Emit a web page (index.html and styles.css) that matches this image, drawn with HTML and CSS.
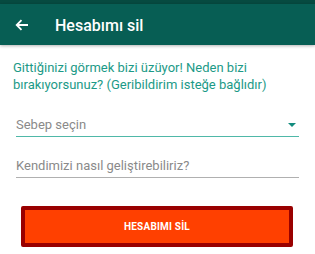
FILE: index.html
```html
<!DOCTYPE html>
<html lang="tr">
<head>
<meta charset="utf-8">
<link rel="stylesheet" href="styles.css">
</head>
<body>
<div class="status"></div>
<header class="toolbar">
  <svg class="back" width="14" height="12" viewBox="0 0 14 12"><path d="M13 6H2M6.5 1.2L1.7 6l4.8 4.8" fill="none" stroke="#fff" stroke-width="1.8"/></svg>
  <span class="title">Hesabımı sil</span>
</header>
<main class="content">
  <p class="intro">Gittiğinizi görmek bizi üzüyor! Neden bizi bırakıyorsunuz? (Geribildirim isteğe bağlıdır)</p>
  <div class="field select">
    <span class="placeholder">Sebep seçin</span>
    <span class="caret"></span>
  </div>
  <div class="field input">
    <span class="placeholder">Kendimizi nasıl geliştirebiliriz?</span>
  </div>
  <div class="actions">
    <button class="delete">HESABIMI SİL</button>
  </div>
</main>
</body>
</html>
```
FILE: styles.css
```css
html, body {
  margin: 0;
  padding: 0;
  background: #fff;
  font-family: Roboto, "Noto Sans", sans-serif;
}
.status {
  height: 4px;
  background: #064a40;
}
.toolbar {
  height: 41px;
  background: #075e54;
  display: flex;
  align-items: center;
  box-shadow: 0 1px 3px rgba(0,0,0,0.3);
  position: relative;
}
.back {
  margin-left: 15px;
  width: 14px;
  height: 12px;
}
.title {
  margin-left: 26px;
  color: #fff;
  font-size: 16px;
  font-weight: 500;
  margin-top: 1px;
}
.content {
  padding: 0 16px;
}
.intro {
  margin: 14px 0 0 -3px;
  color: #1c9a87;
  font-size: 13px;
  line-height: 17px;
}
.field {
  display: flex;
  align-items: flex-end;
  justify-content: space-between;
  height: 25px;
  box-sizing: border-box;
  padding-bottom: 3px;
}
.placeholder {
  color: #8a8a8a;
  font-size: 13px;
  line-height: 16px;
}
.select {
  margin-top: 19px;
  border-bottom: 1px solid #4fb8a8;
}
.caret {
  width: 0;
  height: 0;
  border-left: 4.5px solid transparent;
  border-right: 4.5px solid transparent;
  border-top: 4.5px solid #128c7e;
  margin-right: 3px;
  margin-bottom: 6px;
}
.input {
  margin-top: 16px;
  border-bottom: 1px solid #b0b0b0;
}
.actions {
  margin-top: 28px;
  padding: 0 6px 0 5px;
}
.delete {
  display: block;
  width: 100%;
  height: 41px;
  background: #ff4000;
  border: 4px solid #990000;
  border-radius: 2px;
  color: #fff;
  font-family: Roboto, sans-serif;
  font-weight: 700;
  font-size: 10px;
  letter-spacing: 0.2px;
}
```
